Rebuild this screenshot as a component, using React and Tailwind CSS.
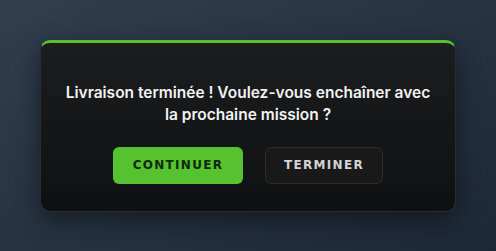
export default function App() {
  return (
    <div className="w-[496px] h-[251px] flex items-center justify-center bg-gradient-to-br from-[#303e4e] to-[#1d2836]">
      <div className="w-[416px] h-[172px] rounded-[10px] border border-[#2a2d30] border-t-[3px] border-t-[#52c22c] bg-gradient-to-b from-[#1c1d1f] to-[#0f1011] shadow-[0_8px_24px_rgba(0,0,0,0.45)] flex flex-col items-center pt-[39px]">
        <p className="text-center text-[15.5px] leading-[22px] font-semibold text-[#f2f2f2] px-2" style={{ fontFamily: "Inter, 'Noto Sans', sans-serif" }}>
          Livraison terminée ! Voulez-vous enchaîner avec
          <br />
          la prochaine mission ?
        </p>
        <div className="flex gap-[22px] mt-[21px]">
          <button className="w-[130px] h-[37px] rounded-[6px] bg-[#56c230] text-[#10290a] text-[12px] font-bold tracking-[1.3px]" style={{ fontFamily: "'DejaVu Sans', sans-serif" }}>
            CONTINUER
          </button>
          <button className="w-[118px] h-[37px] rounded-[6px] bg-[#19191a] border border-[#2c2d2f] text-[#d4d4d4] text-[12px] font-bold tracking-[1.3px]" style={{ fontFamily: "'DejaVu Sans', sans-serif" }}>
            TERMINER
          </button>
        </div>
      </div>
    </div>
  );
}
